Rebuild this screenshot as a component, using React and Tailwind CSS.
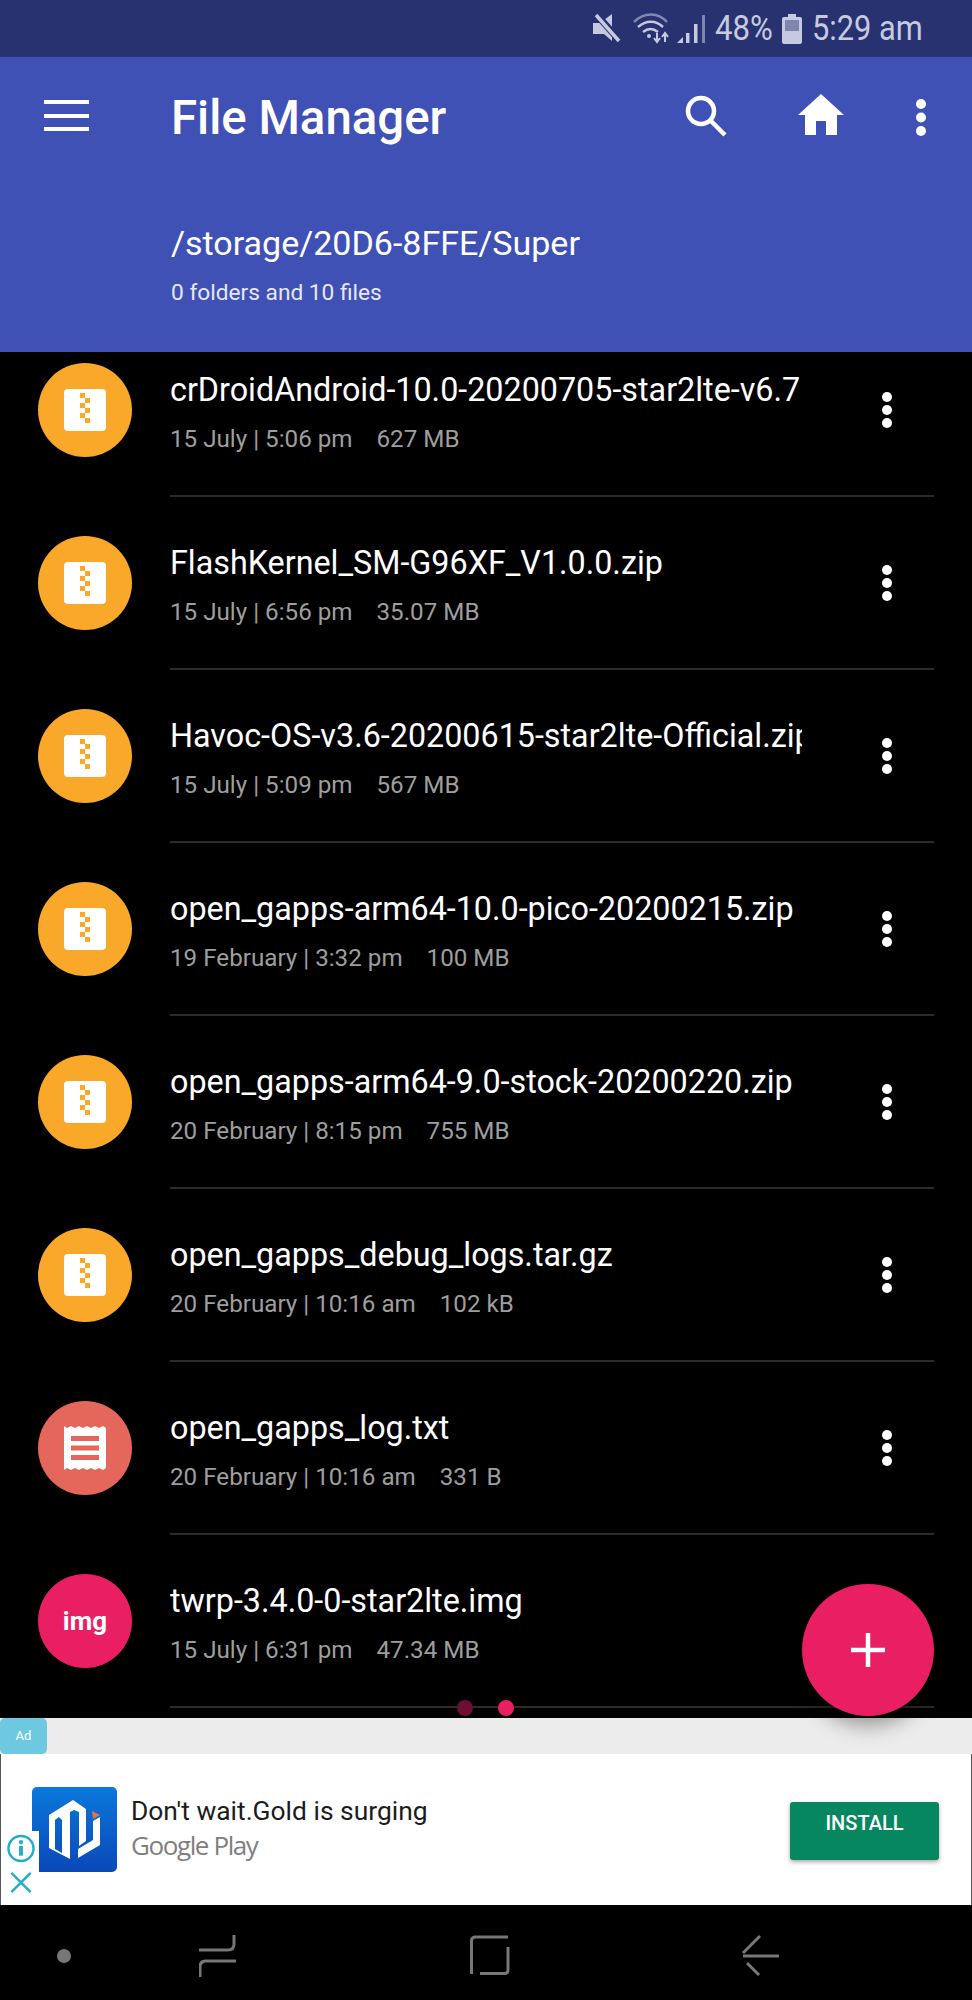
import React from "react";

const files = [
  { name: "crDroidAndroid-10.0-20200705-star2lte-v6.7", date: "15 July | 5:06 pm", size: "627 MB", kind: "zip" },
  { name: "FlashKernel_SM-G96XF_V1.0.0.zip", date: "15 July | 6:56 pm", size: "35.07 MB", kind: "zip" },
  { name: "Havoc-OS-v3.6-20200615-star2lte-Official.zip", date: "15 July | 5:09 pm", size: "567 MB", kind: "zip" },
  { name: "open_gapps-arm64-10.0-pico-20200215.zip", date: "19 February | 3:32 pm", size: "100 MB", kind: "zip" },
  { name: "open_gapps-arm64-9.0-stock-20200220.zip", date: "20 February | 8:15 pm", size: "755 MB", kind: "zip" },
  { name: "open_gapps_debug_logs.tar.gz", date: "20 February | 10:16 am", size: "102 kB", kind: "zip" },
  { name: "open_gapps_log.txt", date: "20 February | 10:16 am", size: "331 B", kind: "txt" },
  { name: "twrp-3.4.0-0-star2lte.img", date: "15 July | 6:31 pm", size: "47.34 MB", kind: "img" },
];

function ZipIcon() {
  return (
    <div className="w-[94px] h-[94px] rounded-full bg-[#f9a82a] flex items-center justify-center">
      <svg width="42" height="42" viewBox="0 0 42 42">
        <rect width="42" height="42" rx="4" fill="#fff" />
        <g fill="#f9a82a">
          <rect x="16" y="4" width="5" height="5" />
          <rect x="21" y="9" width="5" height="5" />
          <rect x="16" y="14" width="5" height="5" />
          <rect x="21" y="19" width="5" height="5" />
          <rect x="16" y="24" width="5" height="5" />
          <rect x="21" y="29" width="5" height="5" />
        </g>
      </svg>
    </div>
  );
}

function TxtIcon() {
  return (
    <div className="w-[94px] h-[94px] rounded-full bg-[#e5665a] flex items-center justify-center">
      <svg width="44" height="46" viewBox="0 0 44 46">
        <path
          d="M1 1l3 2 4-2 4 2 4-2 4 2 4-2 4 2 4-2 4 2 4-2 3 2v40l-3 2-4-2-4 2-4-2-4 2-4-2-4 2-4-2-4 2-4-2-3 2z"
          fill="#fff"
        />
        <rect x="8" y="11" width="28" height="5" fill="#e5665a" />
        <rect x="8" y="20.5" width="28" height="5" fill="#e5665a" />
        <rect x="8" y="30" width="28" height="5" fill="#e5665a" />
      </svg>
    </div>
  );
}

function ImgIcon() {
  return (
    <div className="w-[94px] h-[94px] rounded-full bg-[#e91e63] flex items-center justify-center text-white text-[26px] font-bold">
      img
    </div>
  );
}

function MoreDots() {
  return (
    <svg width="12" height="38" viewBox="0 0 12 38">
      <circle cx="6" cy="6" r="5" fill="#fff" />
      <circle cx="6" cy="19" r="5" fill="#fff" />
      <circle cx="6" cy="32" r="5" fill="#fff" />
    </svg>
  );
}

function FileRow({ file }) {
  return (
    <div className="h-[173px] flex pl-[38px] pr-[38px]">
      <div className="w-[94px] pt-[39px] shrink-0">
        {file.kind === "zip" && <ZipIcon />}
        {file.kind === "txt" && <TxtIcon />}
        {file.kind === "img" && <ImgIcon />}
      </div>
      <div className="ml-[38px] flex-1 min-w-0 flex border-b-2 border-[#2a2a2a]">
        <div className="w-[632px] overflow-hidden pt-[46px]">
          <div className="text-white text-[32.3px] leading-[40px] whitespace-nowrap">{file.name}</div>
          <div className="mt-[14px] flex text-[#9e9e9e] text-[24.2px] leading-[30px] whitespace-nowrap">
            <span>{file.date}</span>
            <span className="ml-[24px]">{file.size}</span>
          </div>
        </div>
        {file.kind !== "img" && (
          <div className="ml-[79px] pt-[67px]">
            <MoreDots />
          </div>
        )}
      </div>
    </div>
  );
}

function StatusBar() {
  return (
    <div className="h-[57px] bg-[#283270] flex items-center justify-end pr-[50px] text-[#c6cae0]">
      <svg width="28" height="30" viewBox="0 0 28 30" className="mr-[12px] mb-[2px]">
        <path d="M0 10h7L19 1v27l-8-7H0z" fill="#c6cae0" />
        <path d="M3 1l24 27" stroke="#283270" strokeWidth="7" />
        <path d="M3 2l23 26" stroke="#c6cae0" strokeWidth="3.500" />
      </svg>
      <svg width="38" height="32" viewBox="0 0 38 32">
        <path d="M1 9c10-10 24-10 33 0" stroke="#8288b0" strokeWidth="2.5" fill="none" />
        <path d="M5 14c8-7 18-7 25 0" stroke="#c6cae0" strokeWidth="2.5" fill="none" />
        <path d="M10 19c5-4 10-4 15 0" stroke="#c6cae0" strokeWidth="2.5" fill="none" />
        <circle cx="16" cy="23" r="2" fill="#c6cae0" />
        <path d="M24 20v8M21 25l3 4 3-4" stroke="#c6cae0" strokeWidth="2" fill="none" />
        <path d="M32 29v-8M29 24l3-4 3 4" stroke="#c6cae0" strokeWidth="2" fill="none" />
      </svg>
      <svg width="30" height="30" viewBox="0 0 30 30" className="ml-[5px]">
        <path d="M1 29l6-6v6z" fill="#c6cae0" />
        <rect x="10" y="19" width="3.5" height="10" fill="#c6cae0" />
        <rect x="18" y="10" width="3.5" height="19" fill="#c6cae0" />
        <rect x="26" y="1" width="3" height="28" fill="#7f86ae" />
      </svg>
      <span className="ml-[9px] text-[35px] leading-none scale-x-[0.89] origin-left w-[58px] whitespace-nowrap">48%</span>
      <svg width="20" height="30" viewBox="0 0 20 30" className="ml-[9px]">
        <path d="M6 0h8v3h4a2 2 0 0 1 2 2v23a2 2 0 0 1-2 2H2a2 2 0 0 1-2-2V5a2 2 0 0 1 2-2h4z" fill="#c6cae0" />
        <rect x="3" y="6" width="14" height="11" fill="#7f86ae" />
      </svg>
      <span className="ml-[10px] text-[35px] leading-none scale-x-[0.88] origin-left w-[110px] whitespace-nowrap">5:29 am</span>
    </div>
  );
}

function Toolbar() {
  return (
    <div className="h-[295px] bg-[#3f51b5] text-white">
      <div className="flex items-start h-[126px] pt-[36px] pl-[44px]">
        <div className="w-[45px] h-[31px] mt-[7px] flex flex-col justify-between">
          <div className="h-[4px] bg-white" />
          <div className="h-[4px] bg-white" />
          <div className="h-[4px] bg-white" />
        </div>
        <div className="ml-[82px] text-[47.4px] leading-[50px] font-medium whitespace-nowrap w-[274px]">File Manager</div>
        <svg width="44" height="44" viewBox="0 0 44 44" className="ml-[239px] mt-[1px]">
          <circle cx="17" cy="17" r="13" stroke="#fff" strokeWidth="4.5" fill="none" />
          <path d="M26 26l15 15" stroke="#fff" strokeWidth="4.5" />
        </svg>
        <svg width="46" height="42" viewBox="0 0 46 42" className="ml-[70px] mt-[1px]">
          <path d="M23 0L46 21h-7v20H28V27H18v14H7V21H0z" fill="#fff" />
        </svg>
        <svg width="12" height="38" viewBox="0 0 12 38" className="ml-[71px] mt-[6px]">
          <circle cx="6" cy="5" r="5" fill="#fff" />
          <circle cx="6" cy="18.5" r="5" fill="#fff" />
          <circle cx="6" cy="32" r="5" fill="#fff" />
        </svg>
      </div>
      <div className="pl-[171px] pt-[40px]">
        <div className="text-[34px] leading-[40px] whitespace-nowrap">/storage/20D6-8FFE/Super</div>
        <div className="mt-[16px] text-[22.7px] leading-[28px] text-[#e6e8f5] whitespace-nowrap">0 folders and 10 files</div>
      </div>
    </div>
  );
}

function AdBanner() {
  return (
    <div className="h-[187px] flex flex-col relative">
      <div className="h-[36px] bg-[#ececec]">
        <div className="w-[47px] h-[36px] bg-[#6cc9e0] rounded-[5px] flex items-center justify-center text-white text-[13px]">Ad</div>
      </div>
      <div className="flex-1 bg-white border-x border-[#555] flex items-start pl-[31px] pr-[32px] pt-[33px]">
        <svg width="85" height="85" viewBox="0 0 85 85" className="shrink-0">
          <defs>
            <linearGradient id="logoBlue" x1="0" y1="0" x2="0" y2="1">
              <stop offset="0" stopColor="#0a78dc" />
              <stop offset="1" stopColor="#0a48b8" />
            </linearGradient>
          </defs>
          <path d="M5 0h75a5 5 0 0 1 5 5v75a5 5 0 0 1-5 5H7V44H0V5a5 5 0 0 1 5-5z" fill="url(#logoBlue)" />
          <path
            d="M17 28L41 13l13 9v32l-7 5V25l-5-2-4 2v47L17 61z M23 33l4-3 3 3v33l-7-4z"
            fill="#fff"
            fillRule="evenodd"
          />
          <path d="M61 34l7-4v28L46 71v-9l15-9z" fill="#fff" />
          <path d="M60 24l8 4-7 4z" fill="#f0703a" />
        </svg>
        <div className="ml-[14px] mt-[6px]">
          <div className="text-[#1c1c1c] text-[26.4px] leading-[36px] whitespace-nowrap">Don't wait.Gold is surging</div>
          <div className="text-[#7f7f7f] text-[26px] leading-[36px] -mt-[2px] tracking-[-1.4px] font-['Open_Sans',sans-serif] whitespace-nowrap">Google Play</div>
        </div>
        <div className="ml-auto mt-[15px] w-[149px] h-[58px] rounded-[3px] bg-[#07875f] shadow-[0_2px_4px_rgba(0,0,0,0.35)] text-white text-[20px] font-medium text-center leading-[20px] pt-[11px]">
          INSTALL
        </div>
      </div>
      <div className="absolute left-[6px] top-[116px] w-[30px] h-[60px] flex flex-col items-center">
        <svg width="30" height="30" viewBox="0 0 30 30">
          <circle cx="15" cy="15" r="13" stroke="#22adc9" strokeWidth="2.5" fill="none" />
          <circle cx="15" cy="8.5" r="2.2" fill="#22adc9" />
          <rect x="13" y="12.5" width="4" height="10" fill="#22adc9" />
        </svg>
        <svg width="24" height="24" viewBox="0 0 24 24" className="mt-[8px]">
          <path d="M2 2l20 20M22 2L2 22" stroke="#22adc9" strokeWidth="2.5" />
        </svg>
      </div>
    </div>
  );
}

function NavBar() {
  return (
    <div className="flex-1 bg-black flex items-start pt-[29px] text-[#777]">
      <div className="w-[14px] h-[14px] rounded-full bg-[#777] ml-[57px] mt-[15px]" />
      <svg width="38" height="44" viewBox="0 0 38 44" className="ml-[128px]" fill="none" stroke="#777" strokeWidth="3">
        <path d="M0 16h29q6 0 6-6V1" />
        <path d="M37 27H7q-6 0-6 6v10" />
      </svg>
      <svg width="40" height="42" viewBox="0 0 40 42" className="ml-[233px] mt-[1px]" fill="none" stroke="#777" strokeWidth="3">
        <path d="M1.500 39V6q0-4 4-4H38" />
        <path d="M38 12v23q0 3.500-3.500 3.500H10" />
      </svg>
      <svg width="38" height="42" viewBox="0 0 38 42" className="ml-[231px] mt-[1px]" fill="none" stroke="#777" strokeWidth="3">
        <path d="M19 1L2 18" />
        <path d="M2 21h36" />
        <path d="M6 28l12 12" />
      </svg>
    </div>
  );
}

export default function App() {
  return (
    <div className="w-[972px] h-[2000px] relative bg-black flex flex-col overflow-hidden font-['Roboto',sans-serif]">
      <StatusBar />
      <Toolbar />
      <div className="h-[1366px] overflow-hidden">
        <div className="-mt-[28px]">
          {files.map((f) => (
            <FileRow key={f.name} file={f} />
          ))}
        </div>
      </div>
      <AdBanner />
      <NavBar />
      <div className="absolute left-[457px] top-[1700px] w-[16px] h-[16px] rounded-full bg-[#6b0f33]" />
      <div className="absolute left-[498px] top-[1700px] w-[16px] h-[16px] rounded-full bg-[#e91e63]" />
      <div className="absolute left-[802px] top-[1584px] w-[132px] h-[132px] rounded-full bg-[#e91e63] shadow-[0_10px_20px_rgba(0,0,0,0.35)] flex items-center justify-center">
        <svg width="34" height="34" viewBox="0 0 34 34">
          <path d="M17 0v34M0 17h34" stroke="#fff" strokeWidth="4.5" />
        </svg>
      </div>
    </div>
  );
}
